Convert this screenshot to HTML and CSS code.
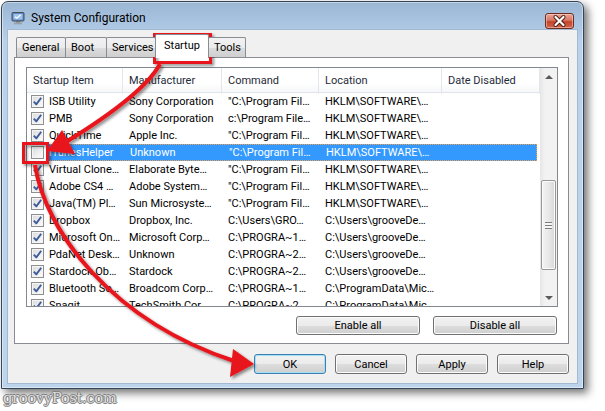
FILE: index.html
```html
<!DOCTYPE html>
<html lang="en">
<head>
    <meta charset="UTF-8">
    <title>System Configuration</title>
    <link rel="stylesheet" href="styles.css">
</head>
<body>
    <svg width="0" height="0" class="defs">
        <symbol id="tick" viewBox="0 0 11 11">
            <path d="M1.8 5.6 L4.3 8.4 L9.2 1.8" fill="none" stroke="#3f5c9a" stroke-width="1.9" stroke-linejoin="round"/>
        </symbol>
    </svg>

    <div class="window">
        <div class="titlebar">
            <svg class="app-icon" width="14" height="14" viewBox="0 0 14 14">
                <rect x="1" y="1.5" width="12" height="8.5" rx="1" fill="#5d89c4" stroke="#4b4f57"/>
                <rect x="2.5" y="3" width="9" height="5.5" fill="#9cc4ee"/>
                <path d="M4 5.8 L5.8 7.3 L9.6 3.8" fill="none" stroke="#fff" stroke-width="1.2"/>
                <rect x="5" y="10" width="4" height="1.5" fill="#6b6f76"/>
                <rect x="3" y="11.5" width="8" height="1.8" fill="#9a9ea5"/>
            </svg>
            <span class="title">System Configuration</span>
            <button class="close">
                <svg width="29" height="16" viewBox="0 0 29 16">
                    <path d="M10.5 4 L18.5 12 M18.5 4 L10.5 12" stroke="#4a1c12" stroke-width="4" stroke-linecap="round"/>
                    <path d="M10.5 4 L18.5 12 M18.5 4 L10.5 12" stroke="#fff" stroke-width="2.2" stroke-linecap="round"/>
                </svg>
            </button>
        </div>

        <div class="client">
            <div class="tabs">
                <div class="tab tab-general">General</div>
                <div class="tab tab-boot">Boot</div>
                <div class="tab tab-services">Services</div>
                <div class="tab tab-startup active">Startup</div>
                <div class="tab tab-tools">Tools</div>
            </div>

            <div class="panel">
                <div class="list">
                    <div class="list-body">
                        <div class="list-head">
                            <div>Startup Item</div>
                            <div>Manufacturer</div>
                            <div>Command</div>
                            <div>Location</div>
                            <div>Date Disabled</div>
                        </div>

                        <div class="row"><span class="cb"><svg><use href="#tick"/></svg></span><div class="cells"><span>ISB Utility</span><span>Sony Corporation</span><span>"C:\Program Fil…</span><span>HKLM\SOFTWARE\…</span><span></span></div></div>
                        <div class="row"><span class="cb"><svg><use href="#tick"/></svg></span><div class="cells"><span>PMB</span><span>Sony Corporation</span><span>c:\Program File…</span><span>HKLM\SOFTWARE\…</span><span></span></div></div>
                        <div class="row"><span class="cb"><svg><use href="#tick"/></svg></span><div class="cells"><span>QuickTime</span><span>Apple Inc.</span><span>"C:\Program Fil…</span><span>HKLM\SOFTWARE\…</span><span></span></div></div>
                        <div class="row selected"><span class="cb"></span><div class="cells"><span>iTunesHelper</span><span>Unknown</span><span>"C:\Program Fil…</span><span>HKLM\SOFTWARE\…</span><span></span></div></div>
                        <div class="row"><span class="cb"><svg><use href="#tick"/></svg></span><div class="cells"><span>Virtual Clone…</span><span>Elaborate Byte…</span><span>"C:\Program Fil…</span><span>HKLM\SOFTWARE\…</span><span></span></div></div>
                        <div class="row"><span class="cb"><svg><use href="#tick"/></svg></span><div class="cells"><span>Adobe CS4 …</span><span>Adobe System…</span><span>"C:\Program Fil…</span><span>HKLM\SOFTWARE\…</span><span></span></div></div>
                        <div class="row"><span class="cb"><svg><use href="#tick"/></svg></span><div class="cells"><span>Java(TM) Pl…</span><span>Sun Microsyste…</span><span>"C:\Program Fil…</span><span>HKLM\SOFTWARE\…</span><span></span></div></div>
                        <div class="row"><span class="cb"><svg><use href="#tick"/></svg></span><div class="cells"><span>Dropbox</span><span>Dropbox, Inc.</span><span>C:\Users\GRO…</span><span>C:\Users\grooveDe…</span><span></span></div></div>
                        <div class="row"><span class="cb"><svg><use href="#tick"/></svg></span><div class="cells"><span>Microsoft On…</span><span>Microsoft Corp…</span><span>C:\PROGRA~1…</span><span>C:\Users\grooveDe…</span><span></span></div></div>
                        <div class="row"><span class="cb"><svg><use href="#tick"/></svg></span><div class="cells"><span>PdaNet Desk…</span><span>Unknown</span><span>C:\PROGRA~2…</span><span>C:\Users\grooveDe…</span><span></span></div></div>
                        <div class="row"><span class="cb"><svg><use href="#tick"/></svg></span><div class="cells"><span>Stardock Ob…</span><span>Stardock</span><span>C:\PROGRA~2…</span><span>C:\Users\grooveDe…</span><span></span></div></div>
                        <div class="row"><span class="cb"><svg><use href="#tick"/></svg></span><div class="cells"><span>Bluetooth So…</span><span>Broadcom Corp…</span><span>C:\PROGRA~1…</span><span>C:\ProgramData\Mic…</span><span></span></div></div>
                        <div class="row"><span class="cb"><svg><use href="#tick"/></svg></span><div class="cells"><span>Snagit</span><span>TechSmith Cor…</span><span>C:\PROGRA~2…</span><span>C:\ProgramData\Mic…</span><span></span></div></div>
                    </div>

                    <div class="vscroll">
                        <div class="arrow-btn"><span class="tri up"></span></div>
                        <div class="track">
                            <div class="thumb"><span class="grip"></span></div>
                        </div>
                        <div class="arrow-btn"><span class="tri down"></span></div>
                    </div>
                </div>

                <div class="panel-buttons">
                    <button class="btn wide">Enable all</button>
                    <button class="btn wide">Disable all</button>
                </div>
            </div>

            <div class="dialog-buttons">
                <button class="btn default">OK</button>
                <button class="btn">Cancel</button>
                <button class="btn">Apply</button>
                <button class="btn">Help</button>
            </div>
        </div>
    </div>

    <div class="watermark">groovyPost.com</div>

    <!-- red callouts drawn over the screenshot -->
    <svg class="marks" width="605" height="411" viewBox="0 0 605 411">
        <defs>
            <filter id="shadow" x="-20%" y="-20%" width="140%" height="140%">
                <feDropShadow dx="2" dy="2" stdDeviation="1.5" flood-color="#000" flood-opacity="0.45"/>
            </filter>
        </defs>
        <g filter="url(#shadow)">
            <g fill="none" stroke="#e8141b">
                <rect x="154.5" y="34.5" width="56" height="28" stroke-width="3"/>
                <rect x="23.5" y="143.5" width="24" height="19" stroke-width="3"/>
                <path d="M160 64 C147 88 110 115 66 142" stroke-width="4"/>
                <path d="M35 165 C45 230 110 320 234 361" stroke-width="4"/>
            </g>
            <polygon points="47,151 62,130 75,154" fill="#e8141b"/>
            <polygon points="254,364 233,349 230,377" fill="#e8141b"/>
        </g>
    </svg>
</body>
</html>
```

FILE: styles.css
```css
* {
    margin: 0;
    padding: 0;
    box-sizing: border-box;
}

body {
    width: 605px;
    height: 411px;
    overflow: hidden;
    background: #ffffff;
    font-family: Roboto, "Liberation Sans", sans-serif;
    font-size: 11px;
    color: #000;
    position: relative;
}

.defs {
    position: absolute;
}

/* Window frame */
.window {
    margin: 1px 0 0 1px;
    width: 583px;
    height: 388px;
    border: 1px solid #34455a;
    border-radius: 7px 7px 0 0;
    padding: 0 6px 5px 6px;
    background: linear-gradient(to bottom, #9ab6d3 0, #a9c4e0 20px, #b9d1ea 40px, #bcd4ec 100%);
    box-shadow: 4px 4px 9px rgba(0, 0, 0, 0.55), inset 0 0 0 1px rgba(255, 255, 255, 0.45);
}

.titlebar {
    height: 28px;
    display: flex;
    align-items: center;
    padding-top: 3px;
}

.app-icon {
    margin-left: 3px;
    margin-right: 6px;
}

.title {
    font-size: 12px;
    color: #000;
    flex: 1;
}

.close {
    align-self: flex-start;
    margin-top: 8px;
    margin-right: 3px;
    width: 29px;
    height: 16px;
    border: 1px solid #6b2d22;
    border-radius: 3px;
    background: linear-gradient(to bottom, #e9a798 0, #d87563 45%, #c4442b 55%, #d2654a 100%);
    box-shadow: inset 0 0 0 1px rgba(255, 220, 210, 0.5);
    display: flex;
}

.close svg {
    margin: -1px;
}

/* Client area */
.client {
    height: 353px;
    background: #f0f0f0;
    padding: 4px 8px 0 6px;
    display: flex;
    flex-direction: column;
    box-shadow: 0 0 0 1px #a3b9d1;
}

.tabs {
    height: 23px;
    display: flex;
    align-items: flex-end;
    padding-left: 2px;
    position: relative;
    z-index: 1;
}

.tab {
    height: 20px;
    border: 1px solid #898c95;
    border-bottom: none;
    border-radius: 2px 2px 0 0;
    background: linear-gradient(to bottom, #f2f2f2 0, #ebebeb 50%, #dddddd 51%, #cfcfcf 100%);
    padding-left: 5px;
    line-height: 19px;
    margin-right: -1px;
}

.tab-general { width: 50px; }
.tab-boot { width: 42px; }
.tab-services { width: 50px; }
.tab-tools { width: 38px; }

.tab.active {
    width: 54px;
    height: 24px;
    margin-bottom: -1px;
    padding-left: 8px;
    line-height: 22px;
    background: #ffffff;
}

.panel {
    height: 287px;
    background: #ffffff;
    border: 1px solid #898c95;
    padding: 9px 10px 0 11px;
    display: flex;
    flex-direction: column;
}

/* List view */
.list {
    height: 240px;
    border: 1px solid #828790;
    display: flex;
    overflow: hidden;
}

.list-body {
    flex: 1;
    overflow: hidden;
}

.list-head {
    height: 25px;
    display: grid;
    grid-template-columns: 96px 99px 97px 123px 1fr;
    background: linear-gradient(to bottom, #ffffff 0, #ffffff 60%, #f6f7f9 100%);
    border-bottom: 1px solid #e1e4e8;
}

.list-head div {
    padding-left: 6px;
    line-height: 26px;
    color: #1f2a3a;
    border-right: 1px solid #e3e6ea;
    white-space: nowrap;
}

.row {
    height: 17px;
    display: flex;
    align-items: center;
}

.cb {
    width: 13px;
    height: 13px;
    margin-left: 4px;
    margin-right: 4px;
    border: 1px solid #8f8f8f;
    background: linear-gradient(135deg, #dadada 0, #f0f0f0 60%, #fbfbfb 100%);
    box-shadow: inset 0 0 0 1px #f5f5f5;
    display: flex;
    align-items: center;
    justify-content: center;
}

.cb svg {
    width: 11px;
    height: 11px;
}

.cells {
    width: 489px;
    height: 17px;
    display: grid;
    grid-template-columns: 75px 99px 97px 123px 1fr;
    line-height: 18px;
    overflow: hidden;
}

.cells span {
    padding-left: 6px;
    white-space: nowrap;
    overflow: hidden;
}

.cells span:first-child {
    padding-left: 1px;
}

.row.selected .cells {
    background: #3399ff;
    color: #ffffff;
    border: 1px dotted #f2a04a;
    line-height: 16px;
}

.row.selected .cells span:first-child {
    padding-left: 0;
}

/* Scrollbar */
.vscroll {
    width: 17px;
    display: flex;
    flex-direction: column;
    background: linear-gradient(to right, #e6e6e6 0, #f2f2f2 30%, #f2f2f2 100%);
}

.arrow-btn {
    height: 17px;
    display: flex;
    align-items: center;
    justify-content: center;
}

.tri {
    width: 0;
    height: 0;
    border-left: 4px solid transparent;
    border-right: 4px solid transparent;
}

.tri.up {
    border-bottom: 4px solid #5a5a5a;
}

.tri.down {
    border-top: 4px solid #5a5a5a;
}

.track {
    flex: 1;
    padding-top: 95px;
}

.thumb {
    width: 15px;
    height: 90px;
    margin-left: 1px;
    border: 1px solid #979797;
    border-radius: 2px;
    background: linear-gradient(to right, #f3f3f3 0, #e8e8e8 50%, #d8d8d8 100%);
    box-shadow: inset 0 0 0 1px #fbfbfb;
    display: flex;
    align-items: center;
    justify-content: center;
}

.grip {
    width: 7px;
    height: 7px;
    background: repeating-linear-gradient(to bottom, #7d7d7d 0, #7d7d7d 1px, #f5f5f5 1px, #f5f5f5 3px);
}

/* Buttons */
.btn {
    width: 72px;
    height: 20px;
    font-family: Roboto, "Liberation Sans", sans-serif;
    font-size: 11px;
    color: #000;
    border: 1px solid #707070;
    border-radius: 3px;
    background: linear-gradient(to bottom, #f2f2f2 0, #ebebeb 50%, #dddddd 51%, #cfcfcf 100%);
    box-shadow: inset 0 0 0 1px #fcfcfc;
}

.btn.default {
    border-color: #3c7fb1;
    box-shadow: inset 0 0 0 1px #a6def5;
}

.panel-buttons {
    display: flex;
    justify-content: flex-end;
    gap: 13px;
    margin-top: 9px;
    margin-right: 1px;
}

.btn.wide {
    width: 124px;
    height: 19px;
}

.dialog-buttons {
    display: flex;
    justify-content: flex-end;
    gap: 9px;
    margin-top: 10px;
}

/* groovyPost watermark under the window */
.watermark {
    margin: 1px 0 0 3px;
    font-family: "DejaVu Serif", "Liberation Serif", serif;
    font-size: 15px;
    line-height: 17px;
    letter-spacing: -0.5px;
    color: #dcdcdc;
    text-shadow: 1px 0 0 #808080, -1px 0 0 #808080, 0 1px 0 #808080, 0 -1px 0 #808080;
}

.marks {
    position: absolute;
    top: 0;
    left: 0;
    pointer-events: none;
}
```
